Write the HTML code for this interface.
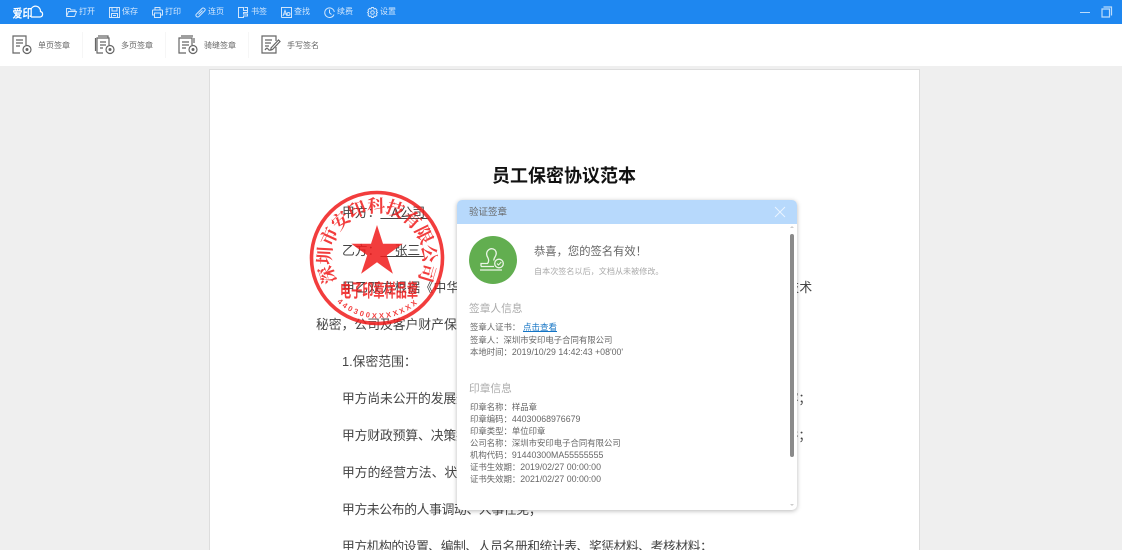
<!DOCTYPE html>
<html lang="zh"><head><meta charset="utf-8"><title>验证签章</title>
<style>
html,body{margin:0;padding:0;width:1122px;height:550px;overflow:hidden}
body{background:#efefef;font-family:"Liberation Sans","Noto Sans CJK SC",sans-serif}
#wrap{position:absolute;left:0;top:0;width:1122px;height:550px;overflow:hidden;filter:blur(.35px)}
.a{position:absolute;white-space:nowrap}
#top{left:0;top:0;width:1122px;height:24px;background:#1e87f0}
#tb{left:0;top:24px;width:1122px;height:42px;background:#fff}
.m{font-size:8px;color:#d5e8fc;line-height:12px;top:6px}
.t{font-size:8px;color:#666;line-height:12px;top:39.500px}
.s{width:1px;height:26px;top:32px;background:#f6f6f6}
svg{position:absolute;overflow:visible}
.w{fill:none;stroke:#d0e5fb;stroke-width:1}
.g{fill:none;stroke:#666;stroke-width:1.2}
#doc{left:209px;top:69px;width:711px;height:481px;background:#fff;border:1px solid #ddd;border-bottom:0;box-sizing:border-box}
.d{font-size:12.800px;color:#444;line-height:20px;left:342px}
#dlg{left:457px;top:200px;width:340px;height:310px;background:#fff;border-radius:5px;box-shadow:0 1px 5px rgba(0,0,0,.28);overflow:hidden}
#hd{left:0;top:0;width:340px;height:24px;background:#b7d9fc}
.i{font-size:8.400px;color:#666;line-height:12px;left:13px}
.i b{font-weight:400;font-size:8.800px}
.h{font-size:10.700px;color:#aaa;line-height:14px;left:12px}
</style></head><body><div id="wrap">
<div class="a" id="top"></div>
<div class="a" id="tb"></div>

<!-- logo -->
<svg style="left:0;top:0" width="50" height="24" viewBox="0 0 50 24"><text x="12.500" y="17.500" font-size="12" font-weight="700" textLength="20" lengthAdjust="spacingAndGlyphs" fill="#fff" font-family="'Liberation Sans','Noto Sans CJK SC',sans-serif">爱印</text><path d="M31 17H40A2.800 2.800 0 0 0 40.500 11.500A5 5 0 0 0 31 9" fill="none" stroke="#fff" stroke-width="1.200"/></svg>

<!-- top menu icons -->
<svg style="left:66px;top:7px" width="11" height="11" viewBox="0 0 11 11"><path class="w" d="M.5 9.5V1.5H4L5 3H9V4.5M.5 9.5H8.5L10.5 4.5H2.5L.5 9.5"/></svg>
<div class="a m" style="left:79px">打开</div>
<svg style="left:109px;top:7px" width="11" height="11" viewBox="0 0 11 11"><path class="w" d="M.5.5H10.5V10.5H.5ZM3 .5V4H8V.5M2.5 10.5V6.5H8.500V10.5M4 8.500H7"/></svg>
<div class="a m" style="left:122px">保存</div>
<svg style="left:152px;top:7px" width="11" height="11" viewBox="0 0 11 11"><path class="w" d="M3 3V.5H8V3M2.500 8H.5V3.500Q.5 3 1 3H10Q10.500 3 10.500 3.500V8H8.500M2.500 6H8.500V10.500H2.500Z"/></svg>
<div class="a m" style="left:165px">打印</div>
<svg style="left:195px;top:7px" width="11" height="11" viewBox="0 0 11 11"><path class="w" d="M1 7.500L7 1.500Q8 .5 9.500 1.500T9.500 4L4 9.500Q2.500 10.500 1.500 9.500T1 7.500M3.500 7.500L7.500 3.500"/></svg>
<div class="a m" style="left:208px">连页</div>
<svg style="left:238px;top:7px" width="11" height="11" viewBox="0 0 11 11"><path class="w" d="M.5.5H5.500V3.500H9.500V5.500H5.500V7H9.500V9H5.500V10.500H.5ZM6.500.5H9.500V3"/></svg>
<div class="a m" style="left:251px">书签</div>
<svg style="left:281px;top:7px" width="11" height="11" viewBox="0 0 11 11"><path class="w" d="M.5 10.500V.5H10.500V10.500H.5M2 9L4 3.500L6 9M2.800 7H5.200"/><circle class="w" cx="7.500" cy="7" r="1.500"/></svg>
<div class="a m" style="left:294px">查找</div>
<svg style="left:324px;top:7px" width="11" height="11" viewBox="0 0 11 11"><path class="w" d="M10 7.500A4.800 4.800 0 1 1 10.300 5"/><path class="w" d="M5.500 2.500V5.800L7.500 7.500"/></svg>
<div class="a m" style="left:337px">续费</div>
<svg style="left:367px;top:7px" width="11" height="11" viewBox="0 0 11 11"><path class="w" d="M4.500.5H6.500L7 2L8.500 1.500L10 3.200L9.300 4.500L10.500 5.500L9.300 6.500L10 8L8.500 9.500L7 9L6.500 10.500H4.500L4 9L2.500 9.500L1 8L1.700 6.500L.5 5.500L1.700 4.500L1 3.200L2.500 1.500L4 2Z"/><circle class="w" cx="5.500" cy="5.500" r="1.800"/></svg>
<div class="a m" style="left:380px">设置</div>

<div class="a" style="left:1080px;top:12px;width:10px;height:1px;background:#bcdcfb"></div>
<svg style="left:1101px;top:6px" width="11" height="12" viewBox="0 0 11 12"><path d="M2.500 1H10.500V9.500M1 3H8.500V11H1Z" fill="none" stroke="#bcdcfb" stroke-width="1.200"/></svg>

<!-- tool icons -->
<svg style="left:12px;top:35px" width="20" height="20" viewBox="0 0 20 20"><path class="g" d="M8 18H1V1H14V10M4 5H11M4 8H11M4 11H8"/><circle class="g" cx="15" cy="14.500" r="4"/><circle cx="15" cy="14.500" r="1.500" fill="#666"/></svg>
<div class="a t" style="left:38px">单页签章</div>
<div class="a s" style="left:82px"></div>
<svg style="left:95px;top:35px" width="20" height="20" viewBox="0 0 20 20"><path class="g" d="M3 1H13V3M8 18H2V3H14V10M0.500 3V16M5 7H11M5 10H11M5 13H8"/><circle class="g" cx="15" cy="14.500" r="4"/><circle cx="15" cy="14.500" r="1.500" fill="#666"/></svg>
<div class="a t" style="left:121px">多页签章</div>
<div class="a s" style="left:165px"></div>
<svg style="left:178px;top:35px" width="20" height="20" viewBox="0 0 20 20"><path class="g" d="M8 18H1V3H14V10M3 1H15M4 7H11M4 10H11M4 13H8M16 3V8"/><circle class="g" cx="15" cy="14.500" r="4"/><circle cx="15" cy="14.500" r="1.500" fill="#666"/></svg>
<div class="a t" style="left:204px">骑缝签章</div>
<div class="a s" style="left:248px"></div>
<svg style="left:261px;top:35px" width="20" height="20" viewBox="0 0 20 20"><path class="g" d="M15 6V1H1V18H15V12M4 5H11M4 8H10M4 11H8M4 15Q6 12 7 14T10 14.500"/><path class="g" d="M10 13L17.500 5L19 6.500L11.500 14.500L10 15Z"/></svg>
<div class="a t" style="left:287px">手写签名</div>

<!-- document -->
<div class="a" id="doc"></div>
<div class="a" style="left:492px;top:163.500px;font-size:18px;line-height:24px;font-weight:700;color:#111">员工保密协议范本</div>
<div class="d a" style="top:203px">甲方：<u>&nbsp;&nbsp;&nbsp;A公司&nbsp;</u></div>
<div class="d a" style="top:241px">乙方：<u>&nbsp;&nbsp;&nbsp;&nbsp;张三&nbsp;</u></div>
<div class="d a" style="top:278px;letter-spacing:.27px">甲乙双方根据《中华人民共和国反不正当竞争法》和国家有关规定，就甲方的技术</div>
<div class="d a" style="top:315px;left:316px">秘密，公司及客户财产保护事宜，达成如下协议：</div>
<div class="d a" style="top:352px">1.保密范围：</div>
<div class="d a" style="top:389px;letter-spacing:-.12px">甲方尚未公开的发展规划、经营策略、销售方案、产品设计、技术数据等信息内容；</div>
<div class="d a" style="top:426px;letter-spacing:-.12px">甲方财政预算、决策报告、审计资料、成本核算、客户名单及合同内容等资料文件；</div>
<div class="d a" style="top:463px">甲方的经营方法、状况及其他商业秘密；</div>
<div class="d a" style="top:500px;letter-spacing:-.35px">甲方未公布的人事调动、人事任免；</div>
<div class="d a" style="top:537px;letter-spacing:-.45px">甲方机构的设置、编制、人员名册和统计表、奖惩材料、考核材料；</div>

<!-- stamp -->
<svg style="left:300px;top:180px;opacity:.85" width="156" height="156" viewBox="0 0 156 156">
<defs>
<path id="ta" d="M37 101A46 46 0 1 1 117 101" fill="none"/>
<path id="tb2" d="M37 122A59.500 59.500 0 0 0 119 122" fill="none"/>
</defs>
<circle cx="77" cy="78" r="65.500" fill="none" stroke="#f01c1c" stroke-width="3.600"/>
<text font-family="'Liberation Serif','Noto Serif CJK SC',serif" font-size="18" font-weight="700" fill="#f01c1c"><textPath href="#ta" textLength="190" lengthAdjust="spacing">深圳市安印科技有限公司</textPath></text>
<polygon points="77,45 83,63.700 102.700,63.700 86.800,75.200 92.900,93.800 77,82.300 61.100,93.800 67.200,75.200 51.300,63.700 71,63.700" fill="#f01c1c"/>
<text x="40" y="117" font-size="18" font-weight="700" fill="#f01c1c" textLength="78" lengthAdjust="spacingAndGlyphs" font-family="'Liberation Sans','Noto Sans CJK SC',sans-serif">电子印章样品章</text>
<text font-family="'Liberation Sans',sans-serif" font-size="7.500" font-weight="700" fill="#f01c1c"><textPath href="#tb2" textLength="88">440300XXXXXXX</textPath></text>
</svg>

<!-- dialog -->
<div class="a" id="dlg">
 <div class="a" id="hd"></div>
 <div class="a" style="left:12px;top:6.500px;font-size:9.500px;line-height:12px;color:#666">验证签章</div>
 <svg style="left:318px;top:7px" width="10" height="10" viewBox="0 0 10 10"><path d="M0 0L10 10M10 0L0 10" stroke="#eaf4ff" stroke-width="1"/></svg>
 <div class="a" style="left:12px;top:36px;width:48px;height:48px;border-radius:50%;background:#62ae50"></div>
 <svg style="left:22px;top:46px" width="28" height="28" viewBox="0 0 28 28"><path d="M1 24H23M2 20.500H15M2 20.500V17.500H8.500Q10.500 15 9 12Q6.500 8 8.500 5Q12 1 16 4Q18.500 7 16 11Q14.500 13 15 14.500" fill="none" stroke="#eaf5e6" stroke-width="1.300"/><circle cx="20" cy="17.500" r="4.300" fill="none" stroke="#eaf5e6" stroke-width="1.300"/><path d="M18 17.500L19.500 19L22.300 16" fill="none" stroke="#eaf5e6" stroke-width="1.100"/></svg>
 <div class="a" style="left:77px;top:43.500px;font-size:11.300px;line-height:16px;color:#666">恭喜，您的签名有效！</div>
 <div class="a" style="left:77px;top:65.500px;font-size:8.100px;line-height:12px;color:#aaa">自本次签名以后，文档从未被修改。</div>

 <div class="a h" style="top:102px">签章人信息</div>
 <div class="a i" style="top:121px">签章人证书：</div>
 <div class="a" style="left:66px;top:121px;font-size:8.500px;line-height:12px;color:#1474c4;text-decoration:underline">点击查看</div>
 <div class="a i" style="top:134px">签章人：深圳市安印电子合同有限公司</div>
 <div class="a i" style="top:146px">本地时间：<b>2019/10/29 14:42:43 +08'00'</b></div>

 <div class="a h" style="top:182px">印章信息</div>
 <div class="a i" style="top:201px">印章名称：样品章</div>
 <div class="a i" style="top:213px">印章编码：<b>44030068976679</b></div>
 <div class="a i" style="top:225px">印章类型：单位印章</div>
 <div class="a i" style="top:237px">公司名称：深圳市安印电子合同有限公司</div>
 <div class="a i" style="top:249px">机构代码：<b>91440300MA55555555</b></div>
 <div class="a i" style="top:261px">证书生效期：<b>2019/02/27 00:00:00</b></div>
 <div class="a i" style="top:273px">证书失效期：<b>2021/02/27 00:00:00</b></div>

 <div class="a" style="left:333px;top:34px;width:4px;height:223px;background:#8a8a8a;border-radius:2px"></div>
 <div class="a" style="left:333px;top:24px;width:0;height:0;border:2px solid transparent;border-bottom-color:#ccc"></div>
 <div class="a" style="left:333px;top:304px;width:0;height:0;border:2px solid transparent;border-top-color:#ccc"></div>
</div>
</div></body></html>
